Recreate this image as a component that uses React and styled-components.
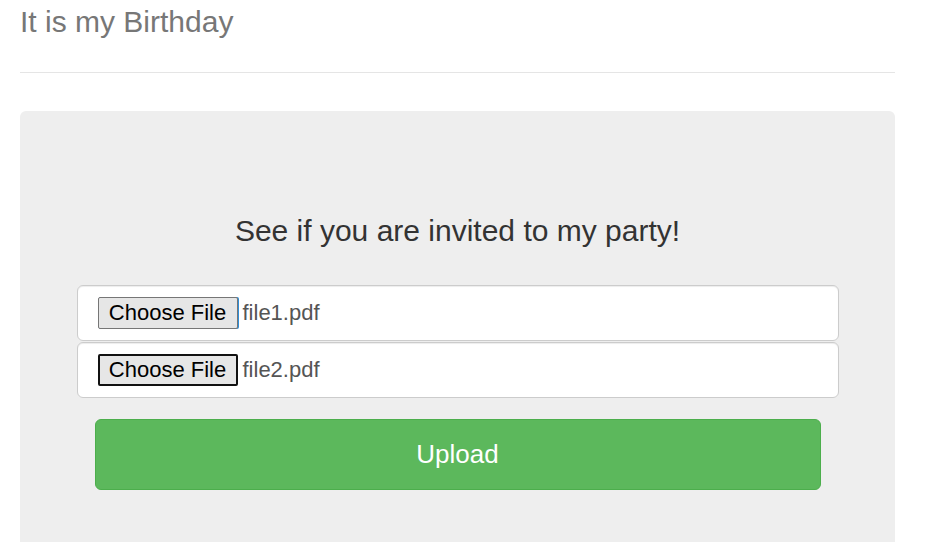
import React from 'react';
import styled, { createGlobalStyle } from 'styled-components';

const GlobalStyle = createGlobalStyle`
  body {
    margin: 0;
    background: #fff;
    font-family: "Liberation Sans", Arial, sans-serif;
  }
`;

function App() {
  const files = ['file1.pdf', 'file2.pdf'];

  return (
    <>
      <GlobalStyle />
      <Page>
        <Header>
          <Title>It is my Birthday</Title>
        </Header>
        <Jumbotron>
          <Lead>See if you are invited to my party!</Lead>
          <Form>
            {files.map((name, i) => (
              <FileField key={name}>
                <ChooseButton type="button" focused={i === 1} edge={i === 0}>
                  Choose File
                </ChooseButton>
                <FileName>{name}</FileName>
              </FileField>
            ))}
            <UploadButton type="button">Upload</UploadButton>
          </Form>
        </Jumbotron>
      </Page>
    </>
  );
}

export default App;

const Page = styled.div`
  width: 875px;
  padding: 0 20px;
`;

const Header = styled.div`
  padding-top: 5px;
  padding-bottom: 34px;
  border-bottom: 1px solid #e5e5e5;
`;

const Title = styled.h3`
  margin: 0;
  font-size: 30px;
  font-weight: 400;
  line-height: 33px;
  color: #777;
`;

const Jumbotron = styled.div`
  margin-top: 38px;
  height: 431px;
  background: #eee;
  border-radius: 6px 6px 0 0;
  padding-top: 103px;
  box-sizing: border-box;
`;

const Lead = styled.h2`
  margin: 0 0 38px;
  text-align: center;
  font-size: 30px;
  font-weight: 400;
  line-height: 33px;
  color: #333;
`;

const Form = styled.div`
  display: flex;
  flex-direction: column;
  align-items: center;
`;

const FileField = styled.div`
  box-sizing: border-box;
  width: 762px;
  height: 56px;
  margin-bottom: 1px;
  display: flex;
  align-items: center;
  gap: 5px;
  padding: 0 20px;
  background: #fff;
  border: 1px solid #ccc;
  border-radius: 6px;
  box-shadow: inset 0 1px 1px rgba(0, 0, 0, 0.075);
`;

const ChooseButton = styled.button`
  box-sizing: border-box;
  height: 32px;
  width: 140px;
  padding: 0;
  font-family: "Liberation Sans", Arial, sans-serif;
  font-size: 22px;
  color: #000;
  background: #e6e6e6;
  border: ${({ focused }) => (focused ? '2px solid #111' : '1px solid #767676')};
  border-radius: 2px;
  box-shadow: ${({ edge }) => (edge ? '1px 0 0 #2f8ed8' : 'none')};
`;

const FileName = styled.span`
  font-size: 22px;
  color: #555;
`;

const UploadButton = styled.button`
  box-sizing: border-box;
  margin-top: 20px;
  width: 726px;
  height: 71px;
  font-family: "Liberation Sans", Arial, sans-serif;
  font-size: 26px;
  color: #fff;
  background: #5cb85c;
  border: 1px solid #4cae4c;
  border-radius: 6px;
`;
